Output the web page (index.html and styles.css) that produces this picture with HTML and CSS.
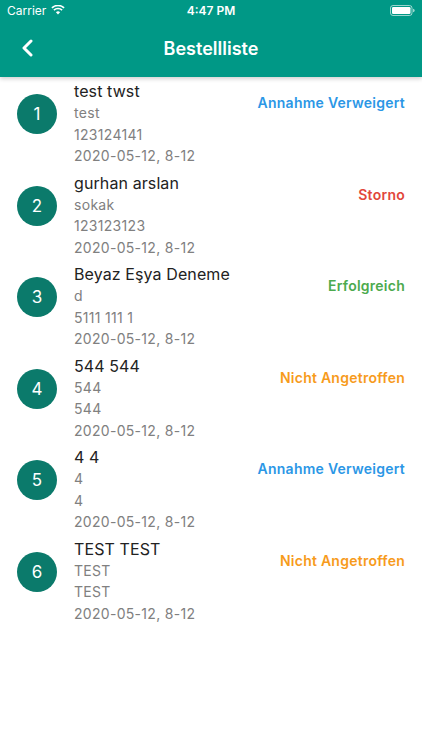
FILE: index.html
```html
<!DOCTYPE html>
<html lang="de">
<head>
  <meta charset="UTF-8" />
  <meta name="viewport" content="width=device-width, initial-scale=1" />
  <title>Bestellliste</title>
  <link rel="stylesheet" href="styles.css">
</head>
<body>

  <header class="topbar">
    <div class="statusbar">
      <div class="status-left">
        <span>Carrier</span>
        <svg class="wifi" width="14" height="10" viewBox="0 0 14 10">
          <path d="M7 9.6 L4.9 7.2 A3.2 3.2 0 0 1 9.1 7.2 Z" fill="#fff"/>
          <path d="M2.9 5.1 A5.9 5.9 0 0 1 11.1 5.1" stroke="#fff" stroke-width="1.6" fill="none"/>
          <path d="M0.9 2.9 A8.8 8.8 0 0 1 13.1 2.9" stroke="#fff" stroke-width="1.6" fill="none"/>
        </svg>
      </div>
      <div class="status-time">4:47 PM</div>
      <div class="status-right">
        <svg width="25" height="11" viewBox="0 0 25 11">
          <rect x="0.5" y="0.5" width="21.5" height="10" rx="2.5" stroke="#fff" stroke-opacity="0.6" fill="none"/>
          <rect x="2" y="2" width="18.5" height="7" rx="1.2" fill="#fff"/>
          <path d="M23 3.8 v3.4 a1.6 1.6 0 0 0 0 -3.4z" fill="#fff" fill-opacity="0.6"/>
        </svg>
      </div>
    </div>
    <nav class="navbar">
      <a href="#" class="back">
        <svg width="14" height="18" viewBox="0 0 14 18">
          <path d="M11 2 L4 9 L11 16" stroke="#fff" stroke-width="3" fill="none" stroke-linecap="round" stroke-linejoin="round"/>
        </svg>
      </a>
      <h1>Bestellliste</h1>
    </nav>
  </header>

  <ul class="orders">
    <li class="order">
      <div class="order-num">1</div>
      <div class="order-info">
        <div class="order-name">test twst</div>
        <div class="order-line">test</div>
        <div class="order-line">123124141</div>
        <div class="order-line">2020-05-12, 8-12</div>
      </div>
      <div class="order-status refused">Annahme Verweigert</div>
    </li>
    <li class="order">
      <div class="order-num">2</div>
      <div class="order-info">
        <div class="order-name">gurhan arslan</div>
        <div class="order-line">sokak</div>
        <div class="order-line">123123123</div>
        <div class="order-line">2020-05-12, 8-12</div>
      </div>
      <div class="order-status cancelled">Storno</div>
    </li>
    <li class="order">
      <div class="order-num">3</div>
      <div class="order-info">
        <div class="order-name">Beyaz Eşya Deneme</div>
        <div class="order-line">d</div>
        <div class="order-line">5111 111 1</div>
        <div class="order-line">2020-05-12, 8-12</div>
      </div>
      <div class="order-status success">Erfolgreich</div>
    </li>
    <li class="order">
      <div class="order-num">4</div>
      <div class="order-info">
        <div class="order-name">544 544</div>
        <div class="order-line">544</div>
        <div class="order-line">544</div>
        <div class="order-line">2020-05-12, 8-12</div>
      </div>
      <div class="order-status absent">Nicht Angetroffen</div>
    </li>
    <li class="order">
      <div class="order-num">5</div>
      <div class="order-info">
        <div class="order-name">4 4</div>
        <div class="order-line">4</div>
        <div class="order-line">4</div>
        <div class="order-line">2020-05-12, 8-12</div>
      </div>
      <div class="order-status refused">Annahme Verweigert</div>
    </li>
    <li class="order">
      <div class="order-num">6</div>
      <div class="order-info">
        <div class="order-name">TEST TEST</div>
        <div class="order-line">TEST</div>
        <div class="order-line">TEST</div>
        <div class="order-line">2020-05-12, 8-12</div>
      </div>
      <div class="order-status absent">Nicht Angetroffen</div>
    </li>
  </ul>

</body>
</html>
```

FILE: styles.css
```css
body {
  font-family: 'Inter', 'Liberation Sans', sans-serif;
  background: #fff;
  margin: 0;
  color: #222;
}

.topbar {
  background: #009886;
  color: white;
  box-shadow: 0 2px 4px rgba(0,0,0,0.18);
  position: relative;
}

.statusbar {
  height: 20px;
  display: flex;
  align-items: center;
  justify-content: space-between;
  padding: 0 7px;
  font-size: 12px;
}

.status-left {
  display: flex;
  align-items: center;
  gap: 5px;
  width: 100px;
}

.status-time {
  font-weight: 600;
}

.status-right {
  width: 100px;
  display: flex;
  justify-content: flex-end;
}

.navbar {
  height: 57px;
  display: flex;
  align-items: center;
  justify-content: center;
  position: relative;
}

.back {
  position: absolute;
  left: 20px;
  top: 19px;
  display: flex;
}

.navbar h1 {
  margin: 0;
  font-size: 18px;
  font-weight: 600;
  margin-top: -1px;
}

.orders {
  list-style: none;
  margin: 0;
  padding: 3px 0 0;
}

.order {
  display: flex;
  align-items: flex-start;
  padding: 0 17px 5px 17px;
}

.order-num {
  width: 40px;
  height: 40px;
  border-radius: 50%;
  background: #0b7a6b;
  color: white;
  font-size: 17px;
  display: flex;
  align-items: center;
  justify-content: center;
  margin-top: 14px;
  flex-shrink: 0;
}

.order-info {
  flex: 1;
  margin-left: 17px;
}

.order-name {
  font-size: 16px;
  line-height: 22px;
  color: #222;
  letter-spacing: 0.1px;
}

.order-line {
  font-size: 14px;
  line-height: 21.5px;
  color: #808080;
  letter-spacing: 0.3px;
}

.order-status {
  font-size: 14px;
  font-weight: 600;
  letter-spacing: 0.25px;
  margin-top: 14px;
}

.refused { color: #2b97e6; }
.cancelled { color: #e2463b; }
.success { color: #4caa4e; }
.absent { color: #f79b1c; }
```
